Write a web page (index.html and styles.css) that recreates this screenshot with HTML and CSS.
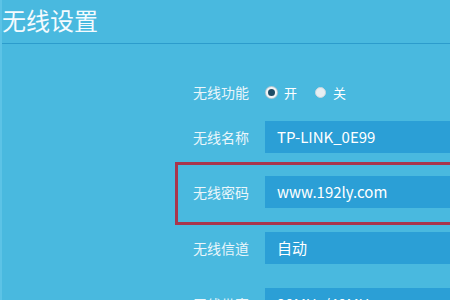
FILE: index.html
```html
<!DOCTYPE html>
<html lang="zh-CN">
<head>
	<meta charset="UTF-8">
	<title>无线设置</title>
	<link rel="stylesheet" href="styles.css">
</head>
<body>
	<div class="page">
		<h1 class="title">无线设置</h1>
		<div class="form">
			<div class="row row-switch">
				<span class="label">无线功能</span>
				<span class="radio on"></span><span class="opt">开</span>
				<span class="radio"></span><span class="opt">关</span>
			</div>
			<div class="row row-name">
				<span class="label">无线名称</span>
				<div class="field">TP-LINK_0E99</div>
			</div>
			<div class="mark">
				<div class="row">
					<span class="label">无线密码</span>
					<div class="field">www.192ly.com</div>
				</div>
			</div>
			<div class="row row-channel">
				<span class="label">无线信道</span>
				<div class="field">自动</div>
			</div>
			<div class="row row-band">
				<span class="label">无线带宽</span>
				<div class="field">20MHz/40MHz</div>
			</div>
		</div>
	</div>
</body>
</html>
```

FILE: styles.css
```css
* {
	margin: 0;
	padding: 0;
	box-sizing: border-box;
}
html, body {
	height: 100%;
	overflow: hidden;
}
body {
	background: #49b9df;
	color: #fff;
	font-family: "Noto Sans CJK SC", "Noto Sans", sans-serif;
}
.page {
	border-left: 2px solid #5cc3e6;
}
.title {
	height: 44px;
	line-height: 40px;
	font-size: 24px;
	font-weight: normal;
	color: #f4fbfe;
	border-bottom: 1px solid #2c9ccc;
}
.form {
	padding-left: 191px;
	padding-top: 32px;
}
.row {
	display: flex;
	align-items: center;
	height: 32px;
}
.label {
	width: 72px;
	font-size: 14px;
	color: #eaf6fb;
}
.field {
	flex: 1;
	height: 32px;
	line-height: 32px;
	padding-left: 12px;
	background: #2b9fd6;
	font-size: 15px;
	white-space: nowrap;
}
.radio {
	width: 11px;
	height: 11px;
	border-radius: 50%;
	background: #e6eef2;
	border: 1px solid #c8d6de;
	margin: 0 7px 0 1px;
}
.radio.on {
	background: #1e4c66;
	border: 2px solid #f2f6f8;
	box-shadow: 0 0 0 1px #b8c8d2;
}
.opt {
	font-size: 13px;
	margin-right: 17px;
}
.row-name {
	margin-top: 13px;
}
.mark {
	margin: 9px 0 0 -18px;
	padding: 11px 0 14px 15px;
	border: 3px solid #a8364c;
	border-right: none;
}
.row-channel {
	margin-top: 7px;
}
.row-band {
	margin-top: 24px;
}
```
